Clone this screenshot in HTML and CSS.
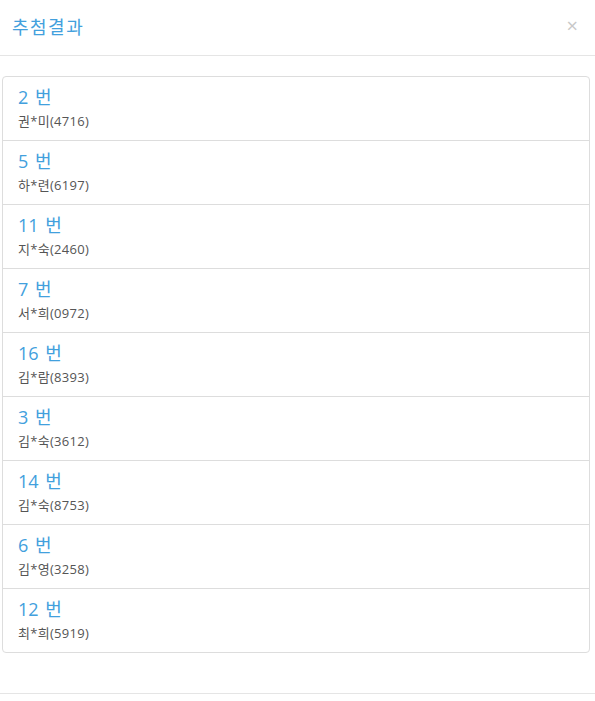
FILE: index.html
```html
<!DOCTYPE html>
<html lang="ko">
<head>
  <meta charset="UTF-8">
  <title>추첨결과</title>
  <link rel="stylesheet" href="styles.css">
</head>
<body>
  <div class="modal-header">
    <h4 class="modal-title">추첨결과</h4>
    <span class="close">&times;</span>
  </div>

  <div class="modal-body">
    <div class="list-group">
      <div class="list-group-item">
        <h4 class="item-heading">2 번</h4>
        <p class="item-text">권*미(4716)</p>
      </div>
      <div class="list-group-item">
        <h4 class="item-heading">5 번</h4>
        <p class="item-text">하*련(6197)</p>
      </div>
      <div class="list-group-item">
        <h4 class="item-heading">11 번</h4>
        <p class="item-text">지*숙(2460)</p>
      </div>
      <div class="list-group-item">
        <h4 class="item-heading">7 번</h4>
        <p class="item-text">서*희(0972)</p>
      </div>
      <div class="list-group-item">
        <h4 class="item-heading">16 번</h4>
        <p class="item-text">김*람(8393)</p>
      </div>
      <div class="list-group-item">
        <h4 class="item-heading">3 번</h4>
        <p class="item-text">김*숙(3612)</p>
      </div>
      <div class="list-group-item">
        <h4 class="item-heading">14 번</h4>
        <p class="item-text">김*숙(8753)</p>
      </div>
      <div class="list-group-item">
        <h4 class="item-heading">6 번</h4>
        <p class="item-text">김*영(3258)</p>
      </div>
      <div class="list-group-item">
        <h4 class="item-heading">12 번</h4>
        <p class="item-text">최*희(5919)</p>
      </div>
    </div>
  </div>

  <div class="modal-footer"></div>
</body>
</html>
```

FILE: styles.css
```css
body {
  font-family: "Open Sans", "Noto Sans CJK KR", sans-serif;
  margin: 0;
  background: #fff;
  color: #555;
}
.modal-header {
  display: flex;
  align-items: center;
  justify-content: space-between;
  height: 56px;
  box-sizing: border-box;
  padding: 0 17px 3px 12px;
  border-bottom: 1px solid #e5e5e5;
}
.modal-title {
  margin: 0;
  font-size: 18px;
  font-weight: normal;
  letter-spacing: 1.5px;
  color: #42a0dd;
}
.close {
  font-size: 20px;
  line-height: 1;
  color: #c8c8c8;
  cursor: pointer;
}
.modal-body {
  padding: 20px 5px 20px 2px;
}
.list-group {
  margin-bottom: 20px;
}
.list-group-item {
  padding: 8px 15px 10px;
  margin-bottom: -1px;
  border: 1px solid #ddd;
}
.list-group-item:first-child {
  border-radius: 4px 4px 0 0;
}
.list-group-item:last-child {
  margin-bottom: 0;
  border-radius: 0 0 4px 4px;
}
.item-heading {
  margin: 0;
  font-size: 18px;
  font-weight: normal;
  line-height: 24px;
  word-spacing: 2px;
  color: #42a0dd;
}
.item-text {
  margin: 3px 0 0;
  font-size: 13px;
  line-height: 18px;
  letter-spacing: 0.3px;
  color: #555;
}
.modal-footer {
  border-top: 1px solid #e5e5e5;
  height: 40px;
}
```
